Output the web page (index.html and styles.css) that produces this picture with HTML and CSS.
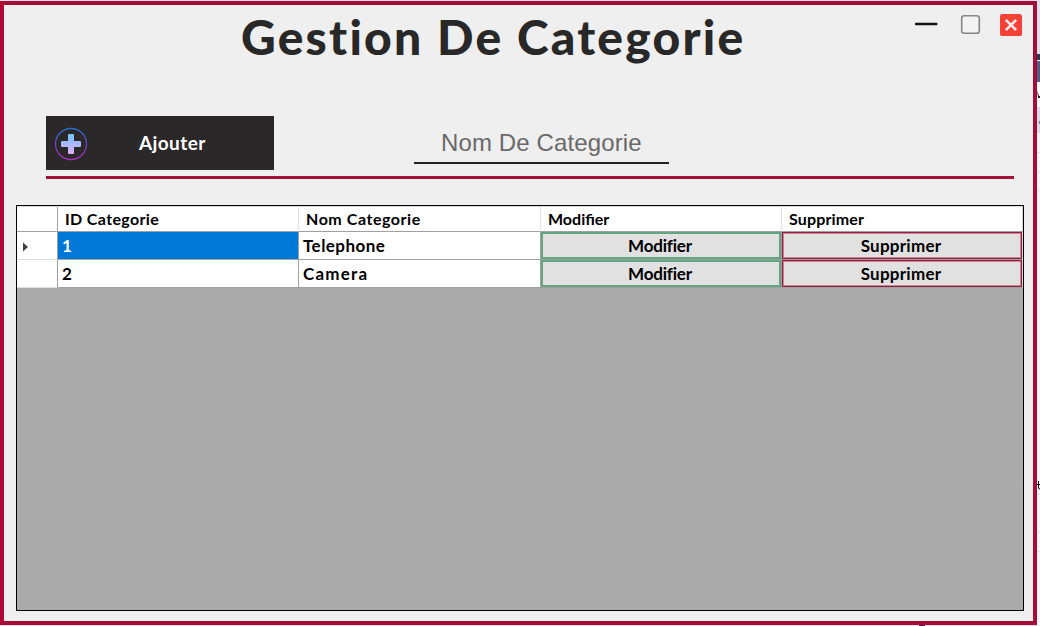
FILE: index.html
```html
<!DOCTYPE html>
<html lang="fr">
<head>
<meta charset="utf-8">
<title>Gestion De Categorie</title>
<link rel="stylesheet" href="styles.css">
</head>
<body>
<div class="desktop">
  <main class="window">
    <header class="titlebar">
      <h1 class="title">Gestion De Categorie</h1>
      <div class="controls">
        <svg width="110" height="26" viewBox="912 12 110 26">
          <rect x="915" y="22.8" width="22.4" height="2.4" rx=".6" fill="#111"/>
          <rect x="961.7" y="15.7" width="17.6" height="17.6" rx="2.6" fill="#f3f3f3" stroke="#868686" stroke-width="1.6"/>
          <rect x="1000" y="14" width="22" height="22" rx="2.6" fill="#f44336"/>
          <path d="M1005.8 19.8l10.4 10.4M1016.2 19.8l-10.4 10.4" stroke="#ffebee" stroke-width="2.5"/>
        </svg>
      </div>
    </header>
    <section class="toolbar">
      <button class="add">
        <svg width="34" height="34" viewBox="0 0 34 34">
          <defs>
            <linearGradient id="ring" x1="0" y1="0" x2="0" y2="1"><stop offset="0" stop-color="#2470d0"/><stop offset=".5" stop-color="#6c40c8"/><stop offset="1" stop-color="#a82fc0"/></linearGradient>
            <linearGradient id="plus" x1="0" y1="0" x2="0" y2="1"><stop offset="0" stop-color="#6dc7ff"/><stop offset="1" stop-color="#e6abff"/></linearGradient>
          </defs>
          <circle cx="17" cy="17" r="15.5" fill="none" stroke="url(#ring)" stroke-width="1.3"/>
          <path fill="url(#plus)" d="M15 7h4q1 0 1 1v6h6q1 0 1 1v4q0 1-1 1h-6v6q0 1-1 1h-4q-1 0-1-1v-6H8q-1 0-1-1v-4q0-1 1-1h6V8q0-1 1-1z"/>
        </svg>
        <span class="add-label">Ajouter</span>
      </button>
      <div class="search">Nom De Categorie</div>
    </section>
    <section class="grid">
      <div class="row head">
        <div class="cell"></div>
        <div class="cell"><span class="h-id">ID Categorie</span></div>
        <div class="cell"><span class="h-nom">Nom Categorie</span></div>
        <div class="cell"><span class="h-mod">Modifier</span></div>
        <div class="cell"><span class="h-sup">Supprimer</span></div>
      </div>
      <div class="row">
        <div class="cell marker"><svg width="6" height="10" viewBox="0 0 6 10"><path d="M0 .5L5 5 0 9.5z" fill="#404040"/></svg></div>
        <div class="cell selected">1</div>
        <div class="cell"><span class="t-tel">Telephone</span></div>
        <div class="cell action"><button class="edit"><span class="b-mod">Modifier</span></button></div>
        <div class="cell action"><button class="delete"><span class="b-sup">Supprimer</span></button></div>
      </div>
      <div class="row">
        <div class="cell marker"></div>
        <div class="cell">2</div>
        <div class="cell"><span class="t-cam">Camera</span></div>
        <div class="cell action"><button class="edit"><span class="b-mod">Modifier</span></button></div>
        <div class="cell action"><button class="delete"><span class="b-sup">Supprimer</span></button></div>
      </div>
    </section>
  </main>
  <aside class="behind">
    <svg width="3" height="626" viewBox="0 0 3 626">
      <rect width="3" height="626" fill="#f8f4f8"/>
      <rect width="3" height="54" fill="#dcdfec"/>
      <rect y="54" width="3" height="6" fill="#293955"/>
      <rect y="61" width="3" height="21" fill="#4d5f88"/>
      <rect y="82" width="3" height="25" fill="#fff"/>
      <path d="M0 90l2 6h1v2H1z" fill="#222"/>
      <rect y="107" width="3" height="26" fill="#d9dbe8"/>
      <rect x="2" y="121" width="1" height="3" fill="#777d99"/>
      <path d="M0 152.500h3M0 171.500h3M0 190.500h3M0 494.500h3M0 532.500h3M0 551.500h3" stroke="#e8e0e8"/>
      <path d="M1.500 481v7q0 1 1.500 1M0 484.500h3" fill="none" stroke="#111"/>
    </svg>
  </aside>
</div>
</body>
</html>
```
FILE: styles.css
```css
* { box-sizing: border-box; }
body { margin: 0; background: #f6dce4; font-family: Lato, "Noto Sans", sans-serif; font-weight: 700; color: #000; }
.desktop { display: flex; width: 1040px; height: 626px; overflow: hidden; background: linear-gradient(#5a1840, #5a1840) 919px 625px / 6px 1px no-repeat; }
.window { width: 1037px; height: 624px; margin-top: 1px; border: 4px solid #a30d3a; border-left-color: #b40636; background: #efefef; }
.titlebar { display: flex; justify-content: space-between; height: 111px; padding: 7px 11px 0 237px; }
.title { margin: -2px 0 0; font-size: 48px; line-height: 54px; font-weight: 900; letter-spacing: 2.2px; color: #282828; white-space: nowrap; }
.controls svg { display: block; }
.toolbar { display: flex; gap: 140px; height: 63px; margin: 0 19px 0 42px; border-bottom: 3px solid #9e123c; }
button { font: inherit; border-radius: 0; }
.add { display: flex; align-items: center; width: 228px; height: 54px; padding: 2px 8px 0; border: 0; background: #2a2828; color: #fff; }
.add-label { margin: -4px 0 0 51px; font-size: 19px; letter-spacing: .4px; }
.search { width: 255px; height: 48px; padding-left: 27px; border-bottom: 2px solid #222; color: #696969; font: 400 24px/54px "Liberation Sans", Arial, sans-serif; letter-spacing: .12px; white-space: nowrap; }
.grid { width: 1008px; height: 406px; margin: 26px 0 0 12px; border: 1px solid #000; background: #ababab; }
.row { display: grid; grid-template-columns: 41px 241px 242px 241px 241px; height: 28px; background: #fff; font-size: 17px; line-height: 27px; }
.row.head { height: 26px; border-top: 1px solid #ddd; font-size: 16px; line-height: 23px; }
.cell { padding-left: 4px; border-right: 1px solid #a0a0a0; border-bottom: 1px solid #a0a0a0; white-space: nowrap; overflow: hidden; }
.head .cell { padding-left: 7px; border-right-color: #e3e3e3; }
.head .cell:first-child { border-right-color: #a0a0a0; }
.cell:last-child { border-right-color: #d8d8d8; }
.marker { display: flex; align-items: center; padding: 2px 0 0 6px; border-bottom-color: #dedede; }
.selected { background: #0078d7; color: #fff; }
.action { padding: 0; }
.action button { display: block; width: 100%; height: 27px; padding: 0; border: 2px solid #63a582; background: #e1e1e1; line-height: 23px; text-align: center; }
.action .delete { border: 1px solid #8f1f42; box-shadow: inset 0 0 0 1px #cf8298; line-height: 25px; }
.h-id { letter-spacing: .35px; }
.h-nom { letter-spacing: .55px; }
.h-sup { letter-spacing: .15px; }
.t-tel { letter-spacing: .45px; }
.t-cam { letter-spacing: 1.2px; }
.b-mod { letter-spacing: -.2px; margin-right: 2px; }
.b-sup { letter-spacing: .25px; margin-right: 2px; }
```
